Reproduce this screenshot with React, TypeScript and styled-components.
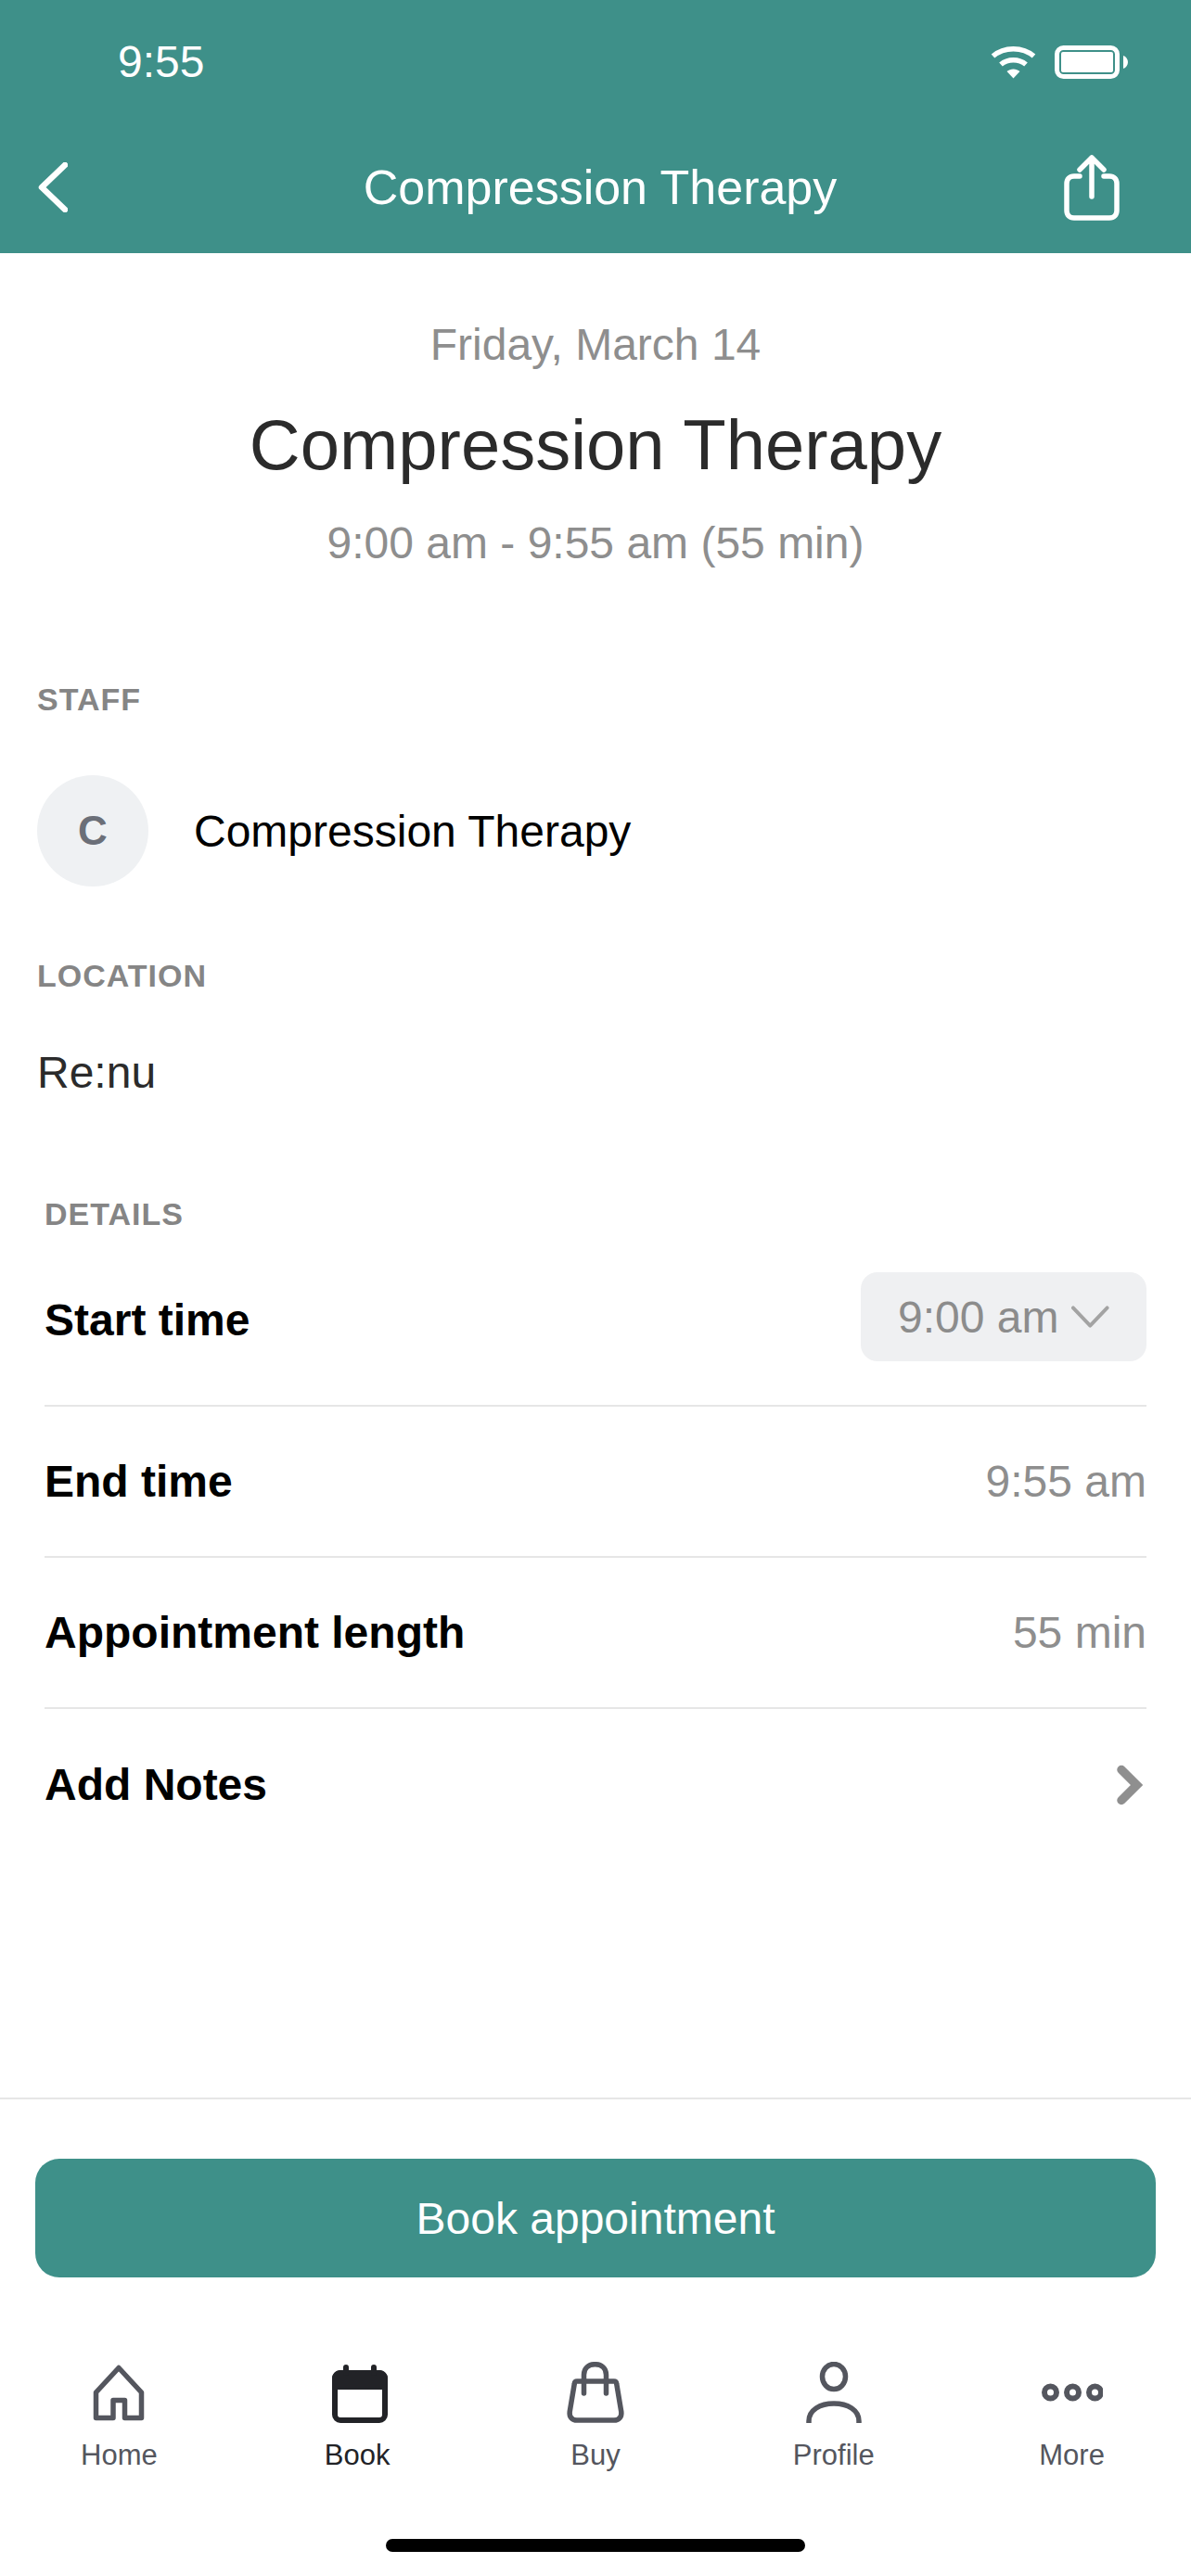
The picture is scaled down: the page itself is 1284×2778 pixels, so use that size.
import React from 'react';
import styled, { createGlobalStyle } from 'styled-components';

const GlobalStyle = createGlobalStyle`
  html, body {
    margin: 0;
    padding: 0;
    background: #fff;
  }

  * {
    box-sizing: border-box;
  }
`;

const Page = styled.div`
  width: 1284px;
  height: 2778px;
  display: flex;
  flex-direction: column;
  background: #fff;
  font-family: 'Liberation Sans', Arial, sans-serif;
  overflow: hidden;
`;

const Header = styled.header`
  height: 273px;
  flex: none;
  display: flex;
  flex-direction: column;
  background: #3e9089;
  color: #fff;
`;

const StatusBar = styled.div`
  height: 133px;
  padding: 0 68px 0 127px;
  display: flex;
  align-items: center;
  justify-content: space-between;
`;

const Clock = styled.span`
  font-size: 48px;
`;

const StatusIcons = styled.div`
  display: flex;
  align-items: center;
  gap: 20px;
`;

const NavBar = styled.div`
  flex: 1;
  padding: 0 77px 2px 41px;
  display: flex;
  align-items: center;
  justify-content: space-between;
`;

const NavTitle = styled.h1`
  margin: 0 0 0 74px;
  font-size: 52px;
  font-weight: 400;
`;

const Summary = styled.section`
  padding-top: 73px;
  display: flex;
  flex-direction: column;
  align-items: center;
`;

const DateLine = styled.div`
  font-size: 48px;
  line-height: 52px;
  color: #8e8e8e;
`;

const Title = styled.h2`
  margin: 38px 0 0;
  font-size: 76px;
  line-height: 88px;
  font-weight: 400;
  color: #2b2b2b;
`;

const TimeLine = styled.div`
  margin-top: 34px;
  font-size: 48px;
  line-height: 56px;
  color: #8e8e8e;
`;

const InfoSection = styled.section<{ $top: number }>`
  margin-top: ${(p) => p.$top}px;
  padding: 0 40px;
`;

const SectionLabel = styled.div`
  font-size: 34px;
  line-height: 40px;
  font-weight: 700;
  letter-spacing: 1px;
  color: #858585;
`;

const StaffRow = styled.div`
  margin-top: 62px;
  display: flex;
  align-items: center;
  gap: 49px;
`;

const Avatar = styled.div`
  width: 120px;
  height: 120px;
  border-radius: 50%;
  display: flex;
  align-items: center;
  justify-content: center;
  background: #eff1f3;
  color: #6b6f78;
  font-size: 44px;
  font-weight: 700;
`;

const StaffName = styled.div`
  font-size: 48px;
  color: #000;
`;

const LocationName = styled.div`
  margin-top: 57px;
  font-size: 48px;
  line-height: 56px;
  color: #2b2b2b;
`;

const Details = styled.section`
  margin-top: 104px;
  padding: 0 48px;
`;

const DetailRow = styled.div<{ $last?: boolean }>`
  height: 163px;
  display: flex;
  align-items: center;
  justify-content: space-between;
  border-bottom: ${(p) => (p.$last ? 'none' : '2px solid #e6e6e6')};
`;

const FirstRow = styled(DetailRow)`
  height: 188px;
  padding-top: 3px;
`;

const RowLabel = styled.div`
  font-size: 48px;
  font-weight: 700;
  color: #000;
`;

const RowValue = styled.div`
  font-size: 48px;
  color: #8e8e8e;
`;

const TimeSelect = styled.div`
  width: 308px;
  height: 96px;
  margin-bottom: 7px;
  padding: 0 40px;
  display: flex;
  align-items: center;
  gap: 14px;
  border-radius: 18px;
  background: #eff0f2;
  font-size: 48px;
  color: #8c8c8c;
  white-space: nowrap;
`;

const Spacer = styled.div`
  flex: 1;
`;

const Footer = styled.footer`
  flex: none;
  padding: 64px 38px 0;
  border-top: 2px solid #e6e6e6;
`;

const BookButton = styled.button`
  width: 100%;
  height: 128px;
  border: 0;
  border-radius: 26px;
  background: #3e9089;
  color: #fff;
  font-family: inherit;
  font-size: 48px;
`;

const TabBar = styled.nav`
  height: 322px;
  margin: 0 -38px;
  padding-top: 91px;
  display: grid;
  grid-template-columns: repeat(5, 1fr);
  align-content: start;
  position: relative;
`;

const Tab = styled.div<{ $active?: boolean }>`
  display: flex;
  flex-direction: column;
  align-items: center;
  gap: 17px;
  font-size: 31px;
  line-height: 36px;
  color: ${(p) => (p.$active ? '#222327' : '#54565e')};
`;

const HomeIndicator = styled.div`
  position: absolute;
  left: 416px;
  bottom: 26px;
  width: 452px;
  height: 14px;
  border-radius: 7px;
  background: #000;
`;

const WifiIcon = () => (
  <svg width='49' height='36' viewBox='0 0 49 36' fill='none'>
    <path d='M2.5 11.5C14.5 1 34.5 1 46.5 11.5' stroke='#fff' strokeWidth='5.5' />
    <path d='M11 20.5C18.5 14 30.5 14 38 20.5' stroke='#fff' strokeWidth='5.5' />
    <path d='M17.5 28C21.5 24.5 27.5 24.5 31.5 28L24.5 35.5Z' fill='#fff' />
  </svg>
);

const BatteryIcon = () => (
  <svg width='79' height='36' viewBox='0 0 79 36' fill='none'>
    <rect x='2.5' y='2.5' width='65' height='31' rx='7' stroke='#fff' strokeWidth='5' />
    <rect x='7' y='7' width='56' height='22' rx='2' fill='#fff' />
    <path d='M74 11C77 12 79 15 79 18C79 21 77 24 74 25Z' fill='#fff' />
  </svg>
);

const BackIcon = () => (
  <svg width='32' height='54' viewBox='0 0 32 54' fill='none'>
    <path d='M29 3L4 27L29 51' stroke='#fff' strokeWidth='6.5' strokeLinecap='round' strokeLinejoin='round' />
  </svg>
);

const ShareIcon = () => (
  <svg width='60' height='72' viewBox='0 0 60 72' fill='none' stroke='#fff' strokeWidth='5.5' strokeLinecap='round' strokeLinejoin='round'>
    <path d='M17 24H11C6 24 3 27 3 32V61C3 66 6 69 11 69H49C54 69 57 66 57 61V32C57 27 54 24 49 24H43' />
    <path d='M30 46V4M17 17L30 4L43 17' />
  </svg>
);

const ChevronDownIcon = () => (
  <svg width='42' height='26' viewBox='0 0 42 26' fill='none'>
    <path d='M2 3L21 23L40 3' stroke='#a3a3a3' strokeWidth='4' strokeLinecap='round' strokeLinejoin='round' />
  </svg>
);

const ChevronRightIcon = () => (
  <svg width='32' height='46' viewBox='0 0 32 46' fill='none'>
    <path d='M5 6.5L21.5 23L5 39.5' stroke='#8f8f8f' strokeWidth='9.5' strokeLinecap='round' />
  </svg>
);

const HomeIcon = () => (
  <svg width='66' height='66' viewBox='0 0 66 66' fill='none' stroke='currentColor' strokeWidth='5.5' strokeLinejoin='round'>
    <path d='M8.5 33L33 6.5L57.5 33V60.5H39.5V41.5H27V60.5H8.5Z' />
  </svg>
);

const BookIcon = () => (
  <svg width='66' height='66' viewBox='0 0 66 66' fill='none'>
    <rect x='9' y='12' width='54' height='51' rx='6' stroke='currentColor' strokeWidth='6' />
    <path d='M6 30V18C6 13 10 9 15 9H57C62 9 66 13 66 18V30Z' fill='currentColor' />
    <path d='M21 6V12M51 6V12' stroke='currentColor' strokeWidth='6' strokeLinecap='round' />
  </svg>
);

const BuyIcon = () => (
  <svg width='66' height='66' viewBox='0 0 66 66' fill='none' stroke='currentColor' strokeWidth='5.5' strokeLinecap='round' strokeLinejoin='round'>
    <path d='M13 21H53C54.5 21 55.5 22 55.7 23.5L60.8 54C61.5 59.5 58 63 53 63H13C8 63 4.5 59.5 5.2 54L10.3 23.5C10.5 22 11.5 21 13 21Z' />
    <path d='M20.5 34V14C20.5 7 25.5 2.7 32.5 2.7C39.5 2.7 44.5 7 44.5 14V34' />
  </svg>
);

const ProfileIcon = () => (
  <svg width='66' height='66' viewBox='0 0 66 66' fill='none' stroke='currentColor' strokeWidth='5.5'>
    <ellipse cx='33' cy='16' rx='12.5' ry='13.5' />
    <path d='M6 66V64C6 52 18 45 33 45C48 45 60 52 60 64V66' />
  </svg>
);

const MoreIcon = () => (
  <svg width='66' height='66' viewBox='0 0 66 66' fill='none' stroke='currentColor' strokeWidth='6'>
    <circle cx='9.5' cy='33' r='6.5' />
    <circle cx='33.5' cy='33' r='6.5' />
    <circle cx='57.5' cy='33' r='6.5' />
  </svg>
);

const tabs = [
  { label: 'Home', icon: <HomeIcon /> },
  { label: 'Book', icon: <BookIcon />, active: true },
  { label: 'Buy', icon: <BuyIcon /> },
  { label: 'Profile', icon: <ProfileIcon /> },
  { label: 'More', icon: <MoreIcon /> },
];

const App = () => (
  <Page>
    <GlobalStyle />
    <Header>
      <StatusBar>
        <Clock>9:55</Clock>
        <StatusIcons>
          <WifiIcon />
          <BatteryIcon />
        </StatusIcons>
      </StatusBar>
      <NavBar>
        <BackIcon />
        <NavTitle>Compression Therapy</NavTitle>
        <ShareIcon />
      </NavBar>
    </Header>

    <Summary>
      <DateLine>Friday, March 14</DateLine>
      <Title>Compression Therapy</Title>
      <TimeLine>9:00 am - 9:55 am (55 min)</TimeLine>
    </Summary>

    <InfoSection $top={120}>
      <SectionLabel>STAFF</SectionLabel>
      <StaffRow>
        <Avatar>C</Avatar>
        <StaffName>Compression Therapy</StaffName>
      </StaffRow>
    </InfoSection>

    <InfoSection $top={76}>
      <SectionLabel>LOCATION</SectionLabel>
      <LocationName>Re:nu</LocationName>
    </InfoSection>

    <Details>
      <SectionLabel>DETAILS</SectionLabel>
      <FirstRow>
        <RowLabel>Start time</RowLabel>
        <TimeSelect>
          9:00 am
          <ChevronDownIcon />
        </TimeSelect>
      </FirstRow>
      <DetailRow>
        <RowLabel>End time</RowLabel>
        <RowValue>9:55 am</RowValue>
      </DetailRow>
      <DetailRow>
        <RowLabel>Appointment length</RowLabel>
        <RowValue>55 min</RowValue>
      </DetailRow>
      <DetailRow $last>
        <RowLabel>Add Notes</RowLabel>
        <ChevronRightIcon />
      </DetailRow>
    </Details>

    <Spacer />

    <Footer>
      <BookButton>Book appointment</BookButton>
      <TabBar>
        {tabs.map((tab) => (
          <Tab key={tab.label} $active={tab.active}>
            {tab.icon}
            {tab.label}
          </Tab>
        ))}
        <HomeIndicator />
      </TabBar>
    </Footer>
  </Page>
);

export default App;
